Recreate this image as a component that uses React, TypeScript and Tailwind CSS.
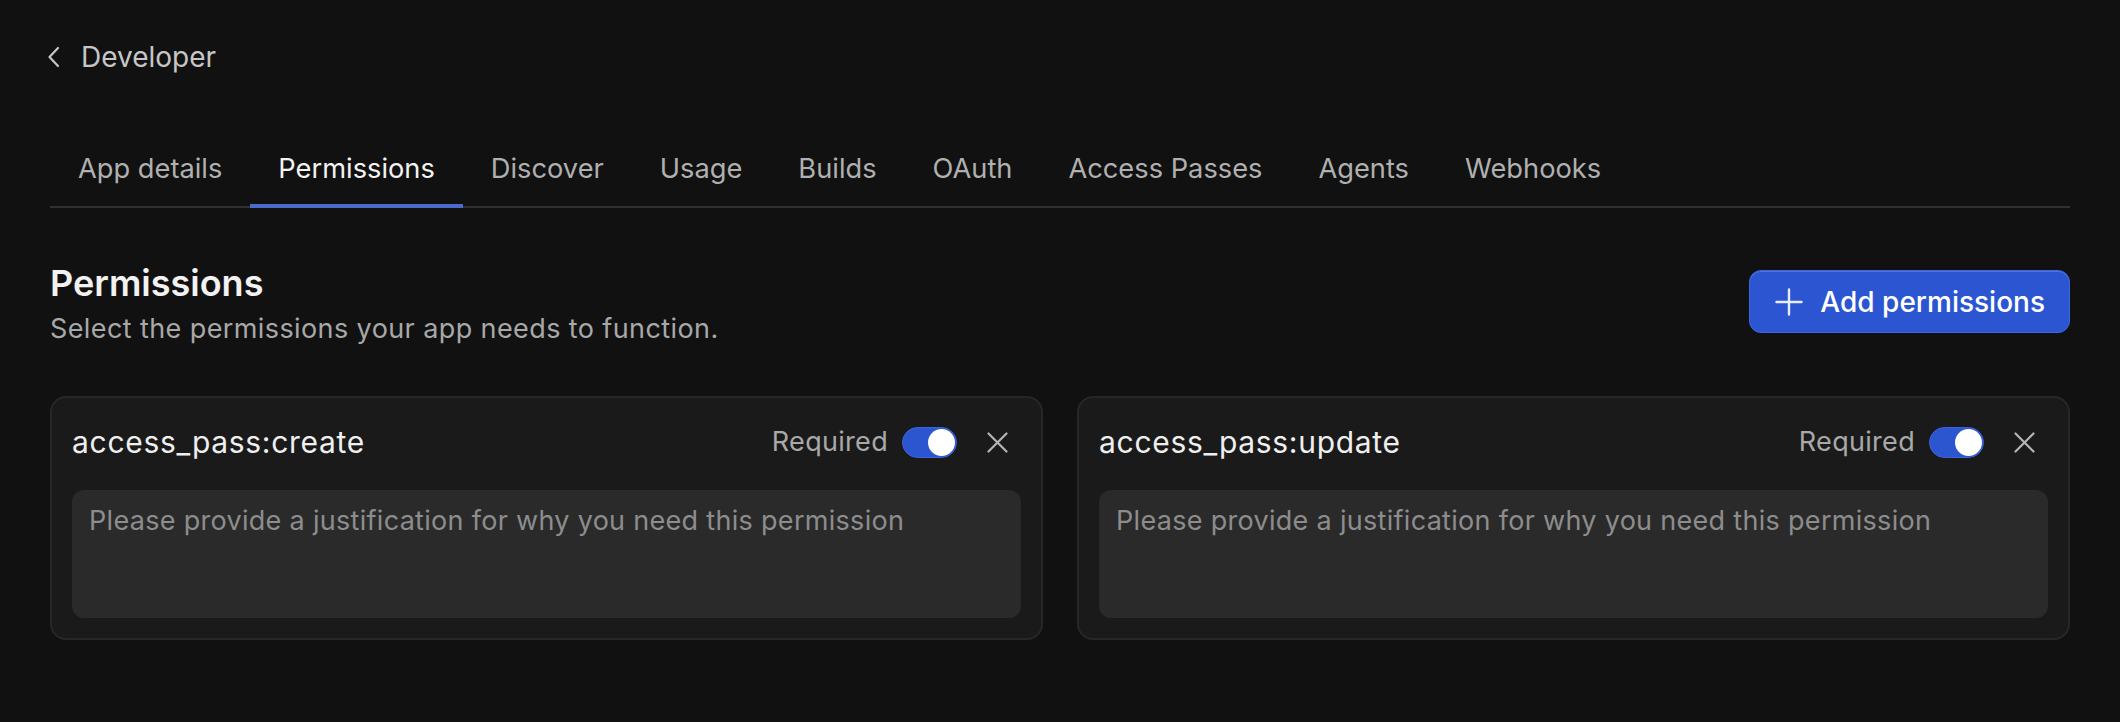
import React from "react";

const tabs = ["App details", "Permissions", "Discover", "Usage", "Builds", "OAuth", "Access Passes", "Agents", "Webhooks"];

function Toggle() {
  return (
    <div className="relative w-[55px] h-[31px] rounded-full bg-[#2c55d0] border border-[#3a63dc] shrink-0">
      <div className="absolute right-[1px] top-[1px] w-[27px] h-[27px] rounded-full bg-white" />
    </div>
  );
}

function Card({ title }: { title: string }) {
  return (
    <div className="rounded-[16px] border-2 border-[#272727] bg-[#1a1a1a] p-[20px]">
      <div className="flex items-center h-[48px]">
        <div className="flex-1 text-[30px] leading-[38px] tracking-[0.7px] text-[#efefef]">{title}</div>
        <span className="text-[27px] leading-[34px] tracking-[0.3px] text-[#a9a9a9]">Required</span>
        <div className="ml-[14px]">
          <Toggle />
        </div>
        <svg className="ml-[30px] mr-[13px]" width="21" height="21" viewBox="0 0 21 21" fill="none">
          <path d="M1.5 1.5 L19.5 19.5 M19.5 1.5 L1.5 19.5" stroke="#b5b5b5" strokeWidth="2.2" strokeLinecap="round" />
        </svg>
      </div>
      <textarea
        className="mt-[24px] block w-full h-[128px] resize-none rounded-[12px] bg-[#2a2a2a] px-[17px] py-[14px] text-[27px] leading-[34px] tracking-[0.3px] text-[#e5e5e5] placeholder:text-[#8d8d8d] outline-none"
        placeholder="Please provide a justification for why you need this permission"
      />
    </div>
  );
}

export default function App() {
  return (
    <div className="min-h-screen w-full bg-[#111111] px-[50px] pt-[38px] pb-[60px]" style={{ fontFamily: "Inter, 'Noto Sans', sans-serif" }}>
      <div className="flex items-center h-[38px]">
        <svg width="14" height="22" viewBox="0 0 14 22" fill="none" className="ml-[-3px]">
          <path d="M11 2 L2.5 11 L11 20" stroke="#c6c6c6" strokeWidth="2.2" strokeLinecap="round" strokeLinejoin="round" />
        </svg>
        <span className="ml-[20px] text-[28px] leading-[36px] text-[#c6c6c6]">Developer</span>
      </div>

      <div className="mt-[75px] flex border-b-2 border-[#303030]">
        {tabs.map((t) => {
          const active = t === "Permissions";
          return (
            <div
              key={t}
              className={
                active
                  ? "relative px-[28px] pb-[19px] text-[27.25px] leading-[36px] text-[#f3f3f3]"
                  : "relative px-[28px] pb-[19px] text-[27.25px] leading-[36px] text-[#b0b0b0]"
              }
            >
              {t}
              {active && <div className="absolute left-0 right-0 bottom-[-2px] h-[4px] bg-[#4a6bcb]" />}
            </div>
          );
        })}
      </div>

      <div className="mt-[54px] flex items-start justify-between">
        <div>
          <div className="text-[36px] leading-[42px] font-semibold text-[#f2f2f2]">Permissions</div>
          <div className="mt-[7px] text-[27px] leading-[36px] tracking-[0.4px] text-[#a8a8a8]">Select the permissions your app needs to function.</div>
        </div>
        <button className="mt-[8px] flex items-center h-[63px] pl-[25px] pr-[24px] rounded-[12px] bg-[#2c55d1] border border-[#3d66e0] shadow-[inset_0_1px_0_rgba(255,255,255,0.18)]">
          <svg width="28" height="28" viewBox="0 0 28 28" fill="none">
            <path d="M14 1.5 V26.5 M1.5 14 H26.5" stroke="#e8edff" strokeWidth="2.4" strokeLinecap="round" />
          </svg>
          <span className="ml-[17px] text-[28px] leading-[34px] font-medium text-white">Add permissions</span>
        </button>
      </div>

      <div className="mt-[49px] grid grid-cols-2 gap-[34px]">
        <Card title="access_pass:create" />
        <Card title="access_pass:update" />
      </div>
    </div>
  );
}
